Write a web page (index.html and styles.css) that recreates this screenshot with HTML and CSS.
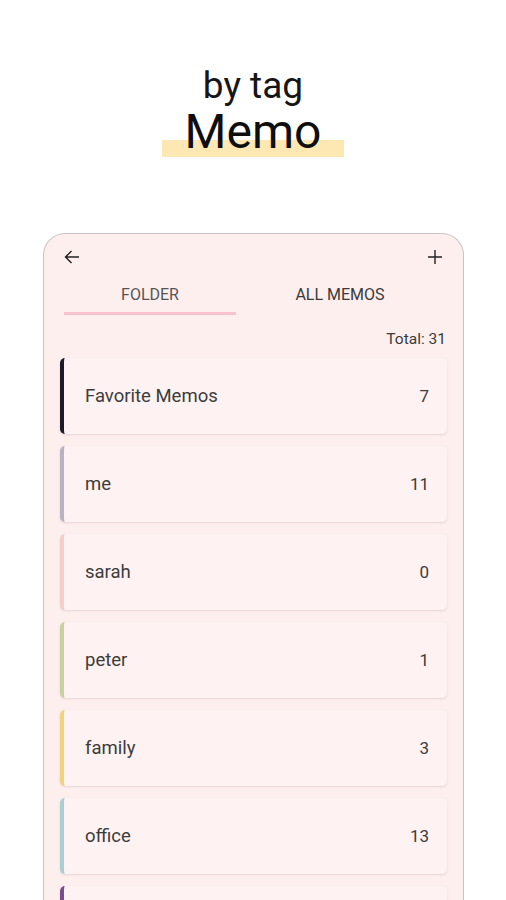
FILE: index.html
```html
<!doctype html>
<html lang="en">
<head>
	<meta charset="UTF-8">
	<title>Memo by tag</title>
	<link rel="stylesheet" href="styles.css">
</head>
<body>
	<div class="hero">
		<div class="hero-sub">by tag</div>
		<div class="hero-title"><span class="mark">Memo</span></div>
	</div>

	<div class="phone">
		<div class="topbar">
			<svg class="icon" viewBox="0 0 16 16" width="16" height="16"><path d="M15 8H1.5M7.5 2L1.5 8l6 6" fill="none" stroke="#222" stroke-width="1.4"/></svg>
			<svg class="icon" viewBox="0 0 16 16" width="16" height="16"><path d="M8 1v14M1 8h14" fill="none" stroke="#222" stroke-width="1.4"/></svg>
		</div>
		<div class="tabs">
			<div class="tab active">FOLDER</div>
			<div class="tab">ALL MEMOS</div>
		</div>
		<div class="total">Total: 31</div>
		<ul class="folders">
			<li class="folder c-fav"><span class="name">Favorite Memos</span><span class="count">7</span></li>
			<li class="folder c-me"><span class="name">me</span><span class="count">11</span></li>
			<li class="folder c-sarah"><span class="name">sarah</span><span class="count">0</span></li>
			<li class="folder c-peter"><span class="name">peter</span><span class="count">1</span></li>
			<li class="folder c-family"><span class="name">family</span><span class="count">3</span></li>
			<li class="folder c-office"><span class="name">office</span><span class="count">13</span></li>
			<li class="folder c-other"><span class="name"></span><span class="count"></span></li>
		</ul>
	</div>
</body>
</html>
```

FILE: styles.css
```css
body,html{margin: 0;padding: 0;}
body{background: #fff;font-family: Roboto, "Liberation Sans", sans-serif;color: #222;overflow: hidden;height: 900px;}
ul,li{list-style: none;margin: 0;padding: 0;}

.hero{padding-top: 64px;text-align: center;}
.hero-sub{font-size: 37px;line-height: 44px;color: #161616;}
.hero-title{height: 52px;}
.mark{display: inline-block;padding: 0 23px;font-size: 48px;line-height: 48px;height: 52px;color: #0e0e0e;background: linear-gradient(to bottom, transparent 32px, #fde8b4 32px, #fde8b4 49px, transparent 49px);}

.phone{margin: 73px 0 0 43px;width: 419px;height: 667px;overflow: hidden;border: 1px solid #cbc4c3;border-bottom: 0;border-radius: 22px 22px 0 0;background: #fdefee;}
.topbar{display: flex;justify-content: space-between;padding: 15px 20px 0;}
.icon{display: block;}

.tabs{display: grid;grid-template-columns: 172px 1fr;margin: 20px 19px 0 20px;}
.tab{text-align: center;font-size: 16px;line-height: 20px;color: #3a3a3a;padding-bottom: 7px;border-bottom: 3px solid transparent;}
.tab.active{border-bottom-color: #f8c3cf;color: #555;}

.total{text-align: right;font-size: 15.5px;line-height: 18px;color: #3a3a3a;margin: 15px 17px 0 0;}

.folders{display: flex;flex-direction: column;gap: 12px;margin: 10px 16px 0 16px;padding-bottom: 4px;}
.folder{display: flex;align-items: center;justify-content: space-between;flex-shrink: 0;height: 76px;padding: 0 18px 0 21px;background: #fef3f2;border-left: 4px solid #ccc;border-radius: 5px;box-shadow: 0 1px 2px rgba(120,90,90,0.18);font-size: 18.5px;color: #3c3c3c;}
.count{font-size: 17px;color: #3c3c3c;}

.c-fav{border-left-color: #1c1b2c;}
.c-me{border-left-color: #b5b3c4;}
.c-sarah{border-left-color: #f6cdca;}
.c-peter{border-left-color: #c4d39f;}
.c-family{border-left-color: #f3d27d;}
.c-office{border-left-color: #a8cfd3;}
.c-other{border-left-color: #7b4d8e;}
```
